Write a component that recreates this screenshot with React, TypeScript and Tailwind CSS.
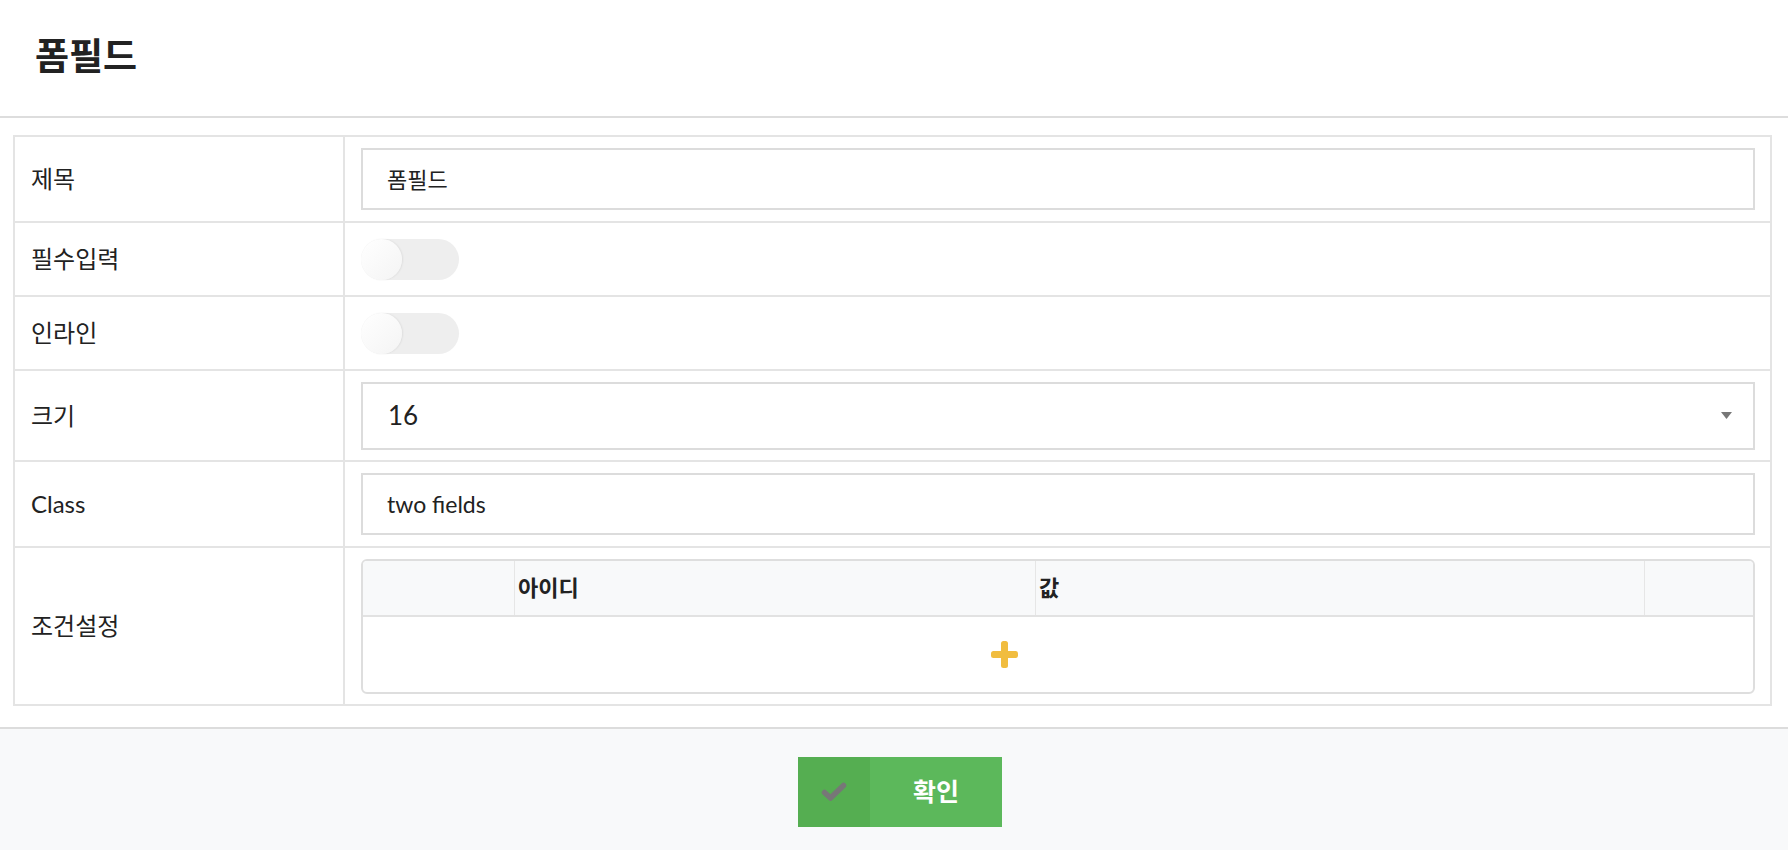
import React from "react";

function Toggle() {
  return (
    <div className="relative w-[98px] h-[41px] rounded-full bg-[#eeeeee]">
      <div className="absolute left-0 top-0 w-[41px] h-[41px] rounded-full bg-gradient-to-br from-white to-[#f4f4f4] shadow-[1px_0_2px_rgba(0,0,0,0.07)]" />
    </div>
  );
}

function Row({
  label,
  height,
  last,
  children,
}: {
  label: string;
  height: string;
  last?: boolean;
  children?: React.ReactNode;
}) {
  return (
    <div className={`flex ${height} ${last ? "" : "border-b-2 border-[#e4e4e4]"}`}>
      <div className="w-[330px] shrink-0 border-r-2 border-[#e4e4e4] pl-[16px] flex items-center text-[24px]">
        {label}
      </div>
      <div className="flex-1 pl-[16px] pr-[15px] flex items-center">{children}</div>
    </div>
  );
}

export default function App() {
  return (
    <div className="min-h-[850px] flex flex-col bg-white text-[#222] font-['Lato','Noto_Sans_CJK_KR',sans-serif]">
      <header className="h-[118px] shrink-0 border-b-2 border-[#dddddd] flex items-center pl-[35px] pb-[5px]">
        <h1 className="text-[37px] font-bold leading-none">폼필드</h1>
      </header>

      <div className="mt-[17px] ml-[13px] mr-[16px] border-2 border-[#e4e4e4]">
        <Row label="제목" height="h-[86px]">
          <div className="w-full h-[62px] border-2 border-[#dcdcdc] flex items-center pl-[24px] text-[22px]">
            폼필드
          </div>
        </Row>
        <Row label="필수입력" height="h-[74px]">
          <Toggle />
        </Row>
        <Row label="인라인" height="h-[74px]">
          <Toggle />
        </Row>
        <Row label="크기" height="h-[91px]">
          <div className="w-full h-[68px] border-2 border-[#dcdcdc] flex items-center justify-between pl-[25px] pr-[21px] text-[26px]">
            <span>16</span>
            <svg width="11" height="7" viewBox="0 0 11 7">
              <path d="M0 0 H11 L5.5 7 Z" fill="#777" />
            </svg>
          </div>
        </Row>
        <Row label="Class" height="h-[86px]">
          <div className="w-full h-[62px] border-2 border-[#dcdcdc] flex items-center pl-[24px] text-[23px]">
            two fields
          </div>
        </Row>
        <Row label="조건설정" height="h-[156px]" last>
          <div className="w-full h-[135px] border-2 border-[#dedede] rounded-[6px] overflow-hidden flex flex-col">
            <div className="h-[56px] shrink-0 grid grid-cols-[152px_521px_609px_1fr] bg-[#f8f9fa] border-b-2 border-[#e2e2e2] text-[22px] font-bold">
              <div className="border-r border-[#e6e6e6]" />
              <div className="border-r border-[#e6e6e6] pl-[3px] flex items-center">아이디</div>
              <div className="border-r border-[#e6e6e6] pl-[3px] flex items-center">값</div>
              <div />
            </div>
            <div className="flex-1 flex">
              <div className="w-[1282px] flex items-center justify-center">
                <svg width="27" height="27" viewBox="0 0 27 27">
                  <rect x="10" y="0" width="7" height="27" rx="2.5" fill="#f1bd3f" />
                  <rect x="0" y="10" width="27" height="7" rx="2.5" fill="#f1bd3f" />
                </svg>
              </div>
            </div>
          </div>
        </Row>
      </div>

      <footer className="mt-[21px] flex-1 border-t-2 border-[#dcdcdc] bg-[#f8f9fa] flex justify-center items-start pt-[28px] pl-[12px]">
        <button className="flex h-[70px] w-[204px]">
          <span className="w-[72px] h-full bg-[#55ae51] flex items-center justify-center">
            <svg width="26" height="20" viewBox="0 0 26 20">
              <path
                d="M3.5 10.5 L9.5 16 L22.5 3.5"
                fill="none"
                stroke="#777"
                strokeWidth="5.5"
                strokeLinecap="round"
                strokeLinejoin="round"
              />
            </svg>
          </span>
          <span className="flex-1 h-full bg-[#5cb85b] flex items-center justify-center text-white text-[25px] font-bold">
            확인
          </span>
        </button>
      </footer>
    </div>
  );
}
